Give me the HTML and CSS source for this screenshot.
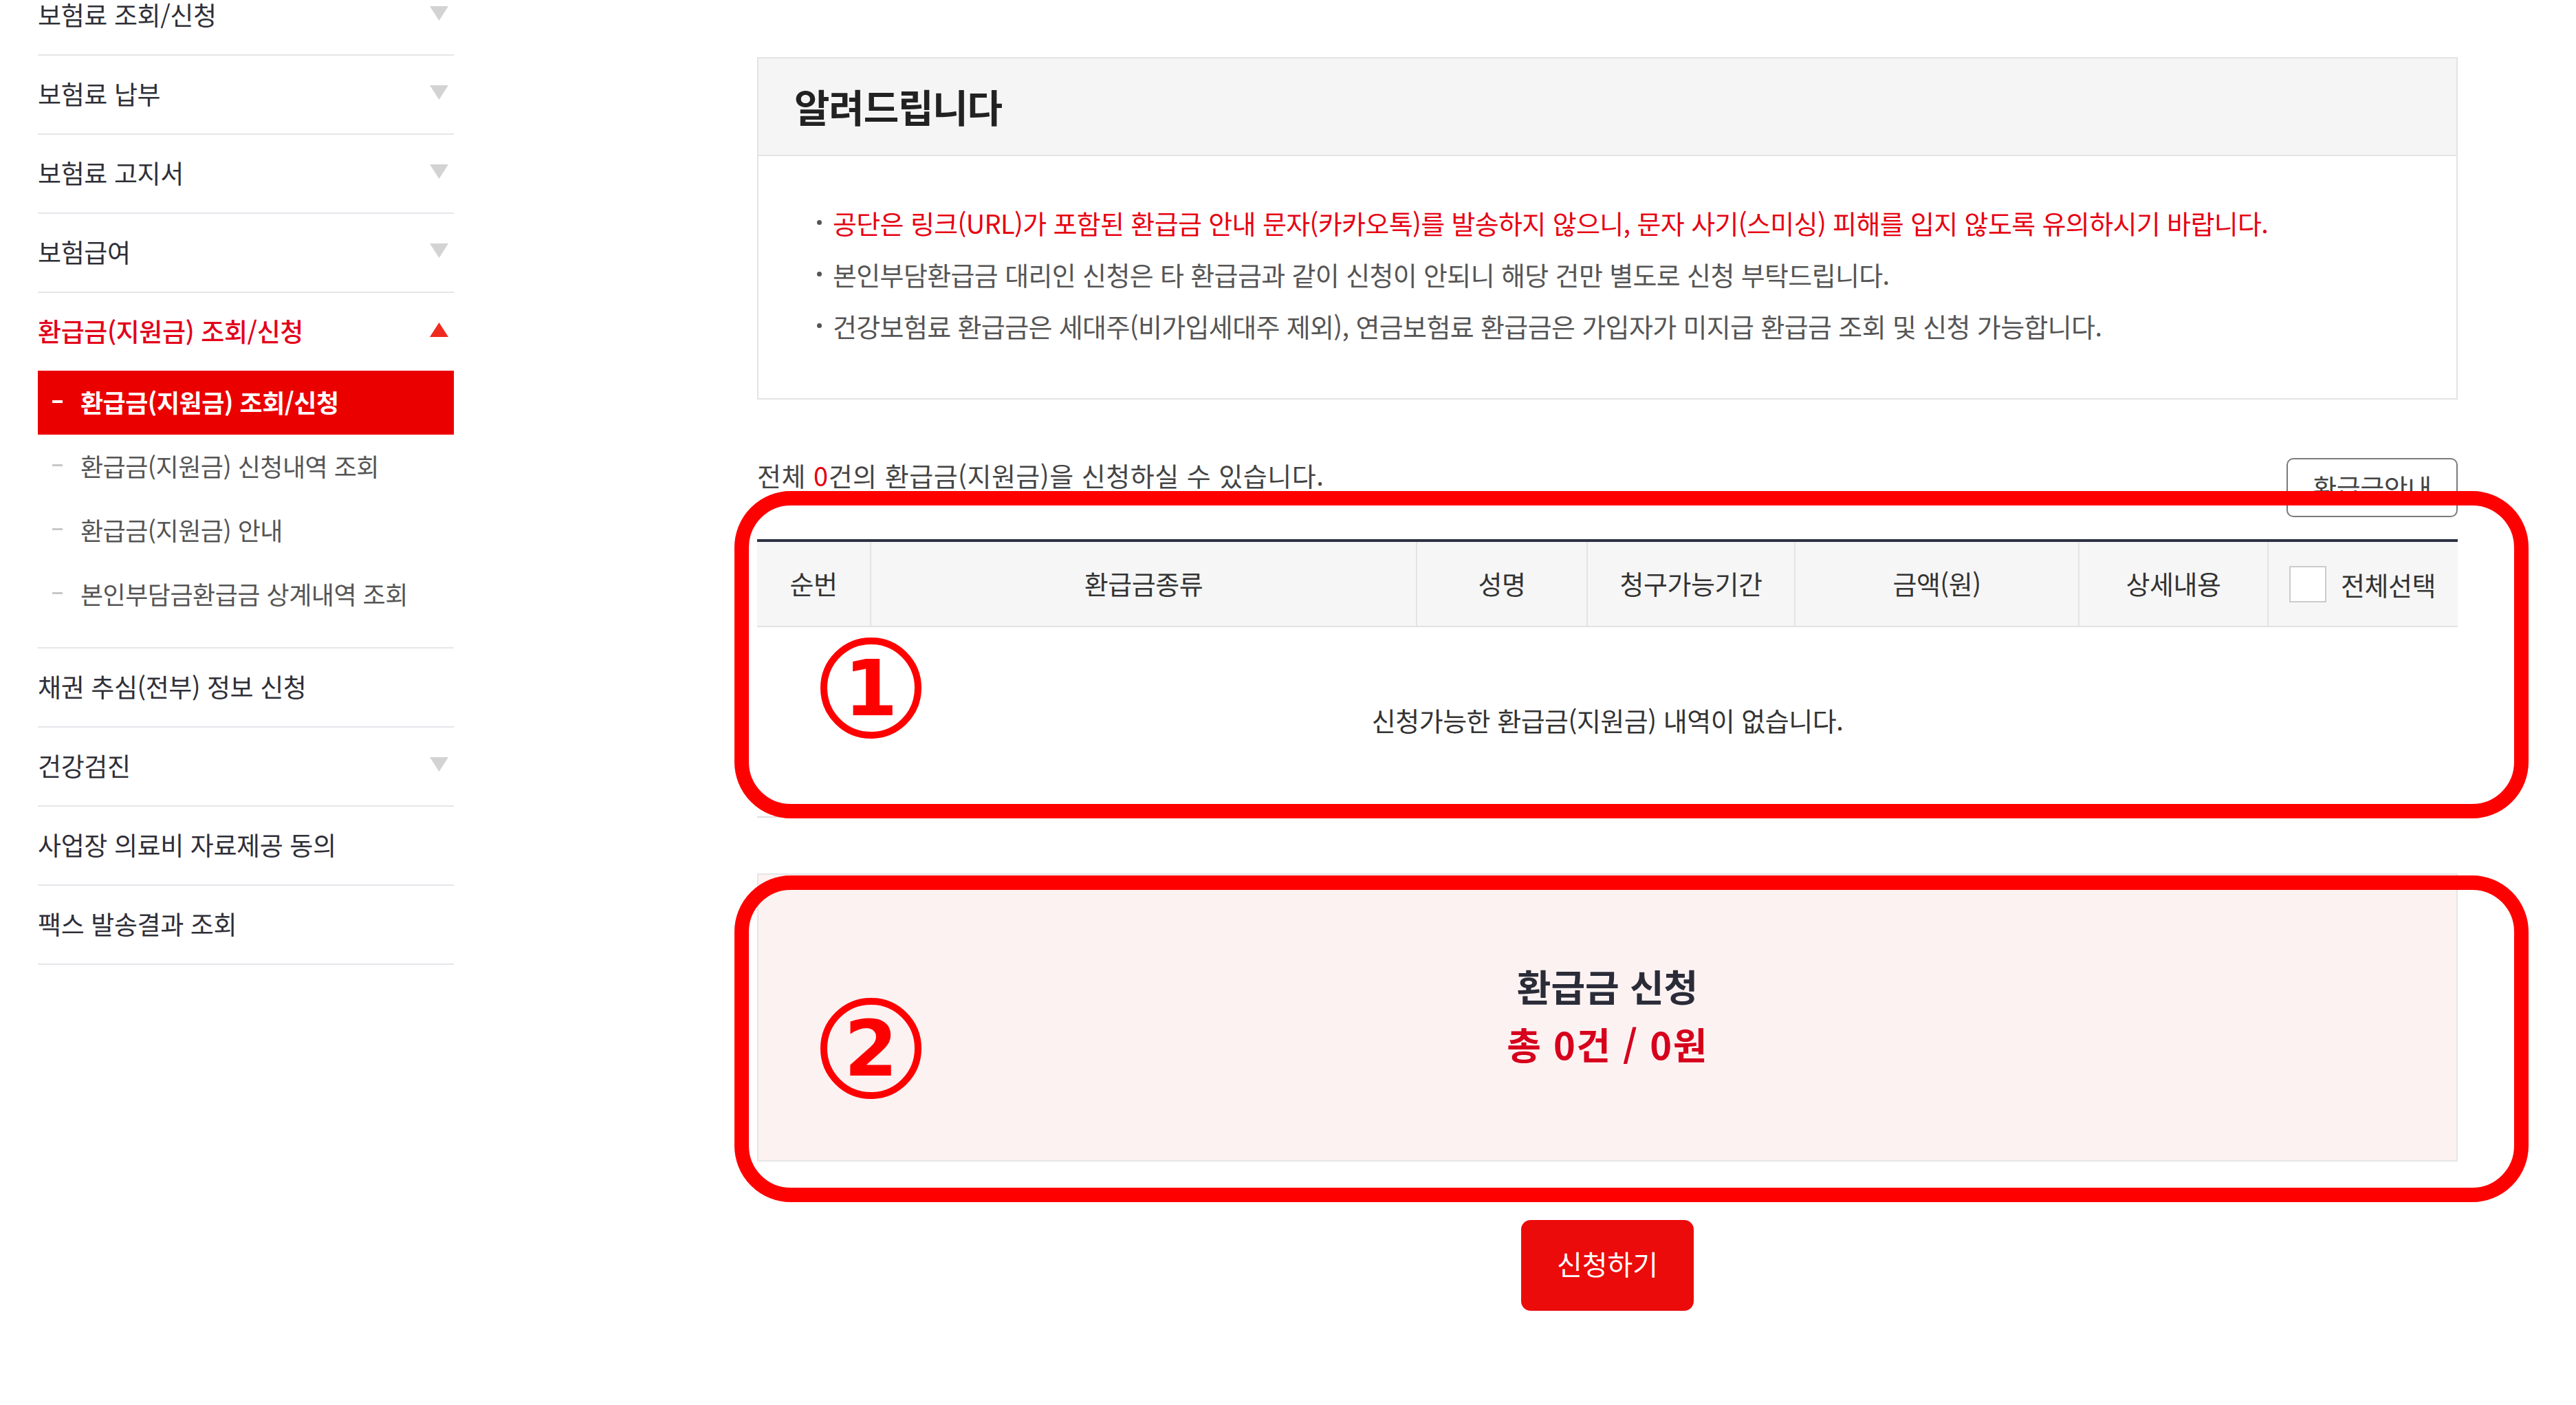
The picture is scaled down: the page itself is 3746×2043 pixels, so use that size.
FILE: index.html
```html
<!DOCTYPE html>
<html lang="ko">
<head>
<meta charset="utf-8">
<title>환급금(지원금) 조회/신청</title>
<link rel="stylesheet" href="styles.css">
</head>
<body>
<div class="page">
  <aside class="sidebar">
    <ul class="nav">
      <li class="nav-item"><div class="nav-head"><span>보험료 조회/신청</span><svg class="arrow" viewBox="0 0 27 21"><path d="M0 0H27L13.5 21Z"/></svg></div></li>
      <li class="nav-item"><div class="nav-head"><span>보험료 납부</span><svg class="arrow" viewBox="0 0 27 21"><path d="M0 0H27L13.5 21Z"/></svg></div></li>
      <li class="nav-item"><div class="nav-head"><span>보험료 고지서</span><svg class="arrow" viewBox="0 0 27 21"><path d="M0 0H27L13.5 21Z"/></svg></div></li>
      <li class="nav-item"><div class="nav-head"><span>보험급여</span><svg class="arrow" viewBox="0 0 27 21"><path d="M0 0H27L13.5 21Z"/></svg></div></li>
      <li class="nav-item open">
        <div class="nav-head"><span>환급금(지원금) 조회/신청</span><svg class="arrow" viewBox="0 0 27 21"><path d="M0 21H27L13.5 0Z"/></svg></div>
        <ul class="sub">
          <li class="sub-item active">환급금(지원금) 조회/신청</li>
          <li class="sub-item">환급금(지원금) 신청내역 조회</li>
          <li class="sub-item">환급금(지원금) 안내</li>
          <li class="sub-item">본인부담금환급금 상계내역 조회</li>
        </ul>
      </li>
      <li class="nav-item"><div class="nav-head"><span>채권 추심(전부) 정보 신청</span></div></li>
      <li class="nav-item"><div class="nav-head"><span>건강검진</span><svg class="arrow" viewBox="0 0 27 21"><path d="M0 0H27L13.5 21Z"/></svg></div></li>
      <li class="nav-item"><div class="nav-head"><span>사업장 의료비 자료제공 동의</span></div></li>
      <li class="nav-item"><div class="nav-head"><span>팩스 발송결과 조회</span></div></li>
    </ul>
  </aside>

  <main class="main">
    <section class="notice">
      <h2 class="notice-title">알려드립니다</h2>
      <ul class="notice-list">
        <li class="warn">공단은 링크(URL)가 포함된 환급금 안내 문자(카카오톡)를 발송하지 않으니, 문자 사기(스미싱) 피해를 입지 않도록 유의하시기 바랍니다.</li>
        <li>본인부담환급금 대리인 신청은 타 환급금과 같이 신청이 안되니 해당 건만 별도로 신청 부탁드립니다.</li>
        <li>건강보험료 환급금은 세대주(비가입세대주 제외), 연금보험료 환급금은 가입자가 미지급 환급금 조회 및 신청 가능합니다.</li>
      </ul>
    </section>

    <div class="summary-row">
      <p class="summary">전체 <em>0</em>건의 환급금(지원금)을 신청하실 수 있습니다.</p>
      <button class="guide-btn" type="button">환급금안내</button>
    </div>

    <div class="grid-table">
      <div class="thead">
        <div class="th">순번</div>
        <div class="th">환급금종류</div>
        <div class="th">성명</div>
        <div class="th">청구가능기간</div>
        <div class="th">금액(원)</div>
        <div class="th">상세내용</div>
        <div class="th th-check"><span class="checkbox"></span><span>전체선택</span></div>
      </div>
      <div class="empty-row">신청가능한 환급금(지원금) 내역이 없습니다.</div>
    </div>

    <section class="apply-box">
      <p class="apply-title">환급금 신청</p>
      <p class="apply-total">총 0건 / 0원</p>
    </section>

    <div class="actions">
      <button class="apply-btn" type="button">신청하기</button>
    </div>

    <div class="mark mark-1"></div>
    <div class="mark mark-2"></div>
    <div class="badge badge-1">1</div>
    <div class="badge badge-2">2</div>
  </main>
</div>
</body>
</html>
```

FILE: styles.css
```css
* { box-sizing: border-box; }

body {
  margin: 0;
  background: #fff;
  font-family: "Noto Sans CJK KR", "Noto Sans", sans-serif;
  color: #333;
}

ul { list-style: none; margin: 0; padding: 0; }

.page {
  display: flex;
  align-items: flex-start;
  padding-left: 55px;
}

/* ---------- sidebar ---------- */
.sidebar {
  flex: none;
  width: 605px;
  margin-top: -34px;
}

.nav-item { border-bottom: 2px solid #e6e6ea; }

.nav-head {
  height: 113px;
  display: flex;
  align-items: center;
  justify-content: space-between;
  padding-right: 8px;
  padding-bottom: 3px;
  font-size: 37px;
  letter-spacing: -0.4px;
  color: #2f2f38;
}

.arrow {
  width: 27px;
  height: 21px;
  fill: #d3d3d3;
  margin-top: -4px;
}

.nav-item.open .nav-head { color: #e3001b; font-weight: 500; }
.nav-item.open .arrow { fill: #ef2b1e; }

.sub { padding-bottom: 30px; }

.sub-item {
  height: 93px;
  display: flex;
  align-items: center;
  padding-left: 21px;
  padding-bottom: 4px;
  font-size: 36px;
  letter-spacing: -0.5px;
  color: #555;
}

.sub-item::before {
  content: "";
  flex: none;
  width: 15px;
  height: 3px;
  background: #c8c8c8;
  margin-right: 26px;
}

.sub-item.active {
  background: #eb0000;
  color: #fff;
  font-weight: 700;
}

.sub-item.active::before { background: #fff; height: 4px; }

/* ---------- main ---------- */
.main {
  position: relative;
  flex: none;
  width: 2473px;
  margin-left: 441px;
  padding-top: 83px;
}

.notice { border: 2px solid #e3e3e3; }

.notice-title {
  margin: 0;
  height: 142px;
  display: flex;
  align-items: center;
  padding-left: 52px;
  padding-bottom: 4px;
  background: #f5f5f5;
  border-bottom: 2px solid #e3e3e3;
  font-size: 56px;
  font-weight: 700;
  letter-spacing: -1.2px;
  color: #222;
}

.notice-list {
  padding: 59px 0 68px 85px;
  font-size: 38px;
  line-height: 75px;
  letter-spacing: -0.65px;
  color: #555;
}

.notice-list li {
  display: flex;
  align-items: center;
}

.notice-list li::before {
  content: "";
  flex: none;
  width: 7px;
  height: 7px;
  border-radius: 50%;
  background: #555;
  margin-right: 16px;
}

.notice-list .warn { color: #e60012; }

.summary-row {
  display: flex;
  justify-content: space-between;
  align-items: flex-start;
  margin-top: 85px;
}

.summary {
  margin: 0;
  font-size: 38px;
  line-height: 50px;
  letter-spacing: 0.5px;
  color: #444;
}

.summary em { font-style: normal; color: #e60012; }

.guide-btn {
  width: 249px;
  height: 86px;
  border: 2px solid #7a7a7a;
  border-radius: 10px;
  background: #fff;
  font-family: inherit;
  font-size: 38px;
  color: #444;
  letter-spacing: -0.5px;
  padding: 0 0 4px;
}

.grid-table {
  margin-top: 32px;
  border-top: 4px solid #2d3142;
}

.thead {
  display: grid;
  grid-template-columns: 164px 794px 248px 302px 413px 275px 1fr;
  height: 124px;
  background: #f6f6f6;
  border-bottom: 2px solid #e2e2e2;
}

.th {
  display: flex;
  align-items: center;
  justify-content: center;
  padding-bottom: 4px;
  border-left: 2px solid #e4e4e4;
  font-size: 38px;
  letter-spacing: -0.5px;
  color: #333;
}

.th:first-child { border-left: none; }

.th-check {
  justify-content: flex-start;
  padding-left: 30px;
  padding-bottom: 0;
  gap: 21px;
}

.checkbox {
  width: 54px;
  height: 53px;
  border: 2px solid #cbcbcb;
  background: #fff;
}

.empty-row {
  height: 277px;
  display: flex;
  align-items: center;
  justify-content: center;
  padding-bottom: 7px;
  border-bottom: 2px solid #dedede;
  font-size: 38px;
  letter-spacing: -0.5px;
  color: #333;
}

.apply-box {
  margin-top: 81px;
  height: 419px;
  padding-bottom: 8px;
  border: 2px solid #e5e5e5;
  background: #fdf2f2;
  display: flex;
  flex-direction: column;
  justify-content: center;
  align-items: center;
}

.apply-title,
.apply-total {
  margin: 0;
  font-size: 54px;
  font-weight: 700;
  line-height: 84px;
}

.apply-title { color: #2a2c38; }
.apply-total { color: #d6001c; letter-spacing: 1.5px; }

.actions {
  display: flex;
  justify-content: center;
  margin-top: 85px;
}

.apply-btn {
  width: 251px;
  height: 132px;
  border: none;
  border-radius: 14px;
  background: #ec0b0b;
  color: #fff;
  font-family: inherit;
  font-size: 40px;
  padding: 0 0 6px;
}

/* ---------- annotations ---------- */
.mark {
  position: absolute;
  left: -33px;
  width: 2609px;
  border: 21px solid #ff0000;
  border-radius: 82px;
  pointer-events: none;
}

.mark-1 { top: 714px; height: 476px; }
.mark-2 { top: 1273px; height: 475px; }

.badge {
  position: absolute;
  left: 92px;
  width: 147px;
  height: 147px;
  border: 10px solid #ff0000;
  border-radius: 50%;
  display: flex;
  align-items: center;
  justify-content: center;
  font-family: "DejaVu Sans", sans-serif;
  font-weight: 700;
  font-size: 112px;
  line-height: 1;
  color: #ff0000;
}

.badge-1 { top: 927px; }
.badge-2 { top: 1451px; }
```
